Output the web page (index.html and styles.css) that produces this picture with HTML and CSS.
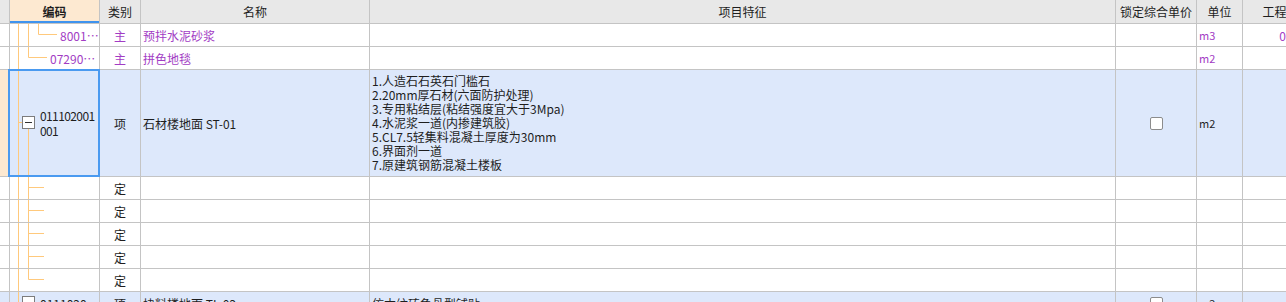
FILE: index.html
```html
<!DOCTYPE html>
<html>
<head>
  <title>清单编制</title>
  <link rel="stylesheet" href="styles.css">
</head>
<body>
  <div class="grid">
    <div class="row head">
      <div class="c c0"></div>
      <div class="c c1 ctr cur-col"><b>编码</b></div>
      <div class="c c2 ctr">类别</div>
      <div class="c c3 ctr">名称</div>
      <div class="c c4 ctr">项目特征</div>
      <div class="c c5 ctr">锁定综合单价</div>
      <div class="c c6 ctr">单位</div>
      <div class="c c7 ctr">工程量</div>
    </div>

    <div class="row">
      <div class="c c0"></div>
      <div class="c c1 code">
        <svg class="tree" width="90" height="22"><path d="M8.5 0V22M18.5 0V22M28.5 0V10.5H47"/></svg>
        <span class="sub lvl3">8001…</span>
      </div>
      <div class="c c2 ctr sub">主</div>
      <div class="c c3 sub">预拌水泥砂浆</div>
      <div class="c c4"></div>
      <div class="c c5"></div>
      <div class="c c6 sub unit">m3</div>
      <div class="c c7 num sub">0.0825</div>
    </div>

    <div class="row">
      <div class="c c0"></div>
      <div class="c c1 code">
        <svg class="tree" width="90" height="22"><path d="M8.5 0V22M18.5 0V10.5H37"/></svg>
        <span class="sub lvl2">07290…</span>
      </div>
      <div class="c c2 ctr sub">主</div>
      <div class="c c3 sub">拼色地毯</div>
      <div class="c c4"></div>
      <div class="c c5"></div>
      <div class="c c6 sub unit">m2</div>
      <div class="c c7"></div>
    </div>

    <div class="row item cur">
      <div class="c c0"></div>
      <div class="c c1 code focus">
        <svg class="tree" width="90" height="106">
          <path d="M8.5 0V106M8 52.5H12M18.5 59V106"/>
          <rect class="box" x="12.5" y="46.5" width="12" height="12"/>
          <path class="minus" d="M15 52.5H22"/>
        </svg>
        <span class="code-no">011102001001</span>
      </div>
      <div class="c c2 ctr">项</div>
      <div class="c c3">石材楼地面 ST-01</div>
      <div class="c c4">
        <div class="feat">
          1.人造石石英石门槛石<br>
          2.20mm厚石材(六面防护处理)<br>
          3.专用粘结层(粘结强度宜大于3Mpa)<br>
          4.水泥浆一道(内掺建筑胶)<br>
          5.CL7.5轻集料混凝土厚度为30mm<br>
          6.界面剂一道<br>
          7.原建筑钢筋混凝土楼板
        </div>
      </div>
      <div class="c c5 ctr"><span class="chk"></span></div>
      <div class="c c6 unit">m2</div>
      <div class="c c7"></div>
    </div>

    <div class="row">
      <div class="c c0"></div>
      <div class="c c1 code"><svg class="tree" width="90" height="22"><path d="M8.5 0V22M18.5 0V22M18 10.5H34"/></svg></div>
      <div class="c c2 ctr">定</div>
      <div class="c c3"></div><div class="c c4"></div><div class="c c5"></div><div class="c c6"></div><div class="c c7"></div>
    </div>
    <div class="row">
      <div class="c c0"></div>
      <div class="c c1 code"><svg class="tree" width="90" height="22"><path d="M8.5 0V22M18.5 0V22M18 10.5H34"/></svg></div>
      <div class="c c2 ctr">定</div>
      <div class="c c3"></div><div class="c c4"></div><div class="c c5"></div><div class="c c6"></div><div class="c c7"></div>
    </div>
    <div class="row">
      <div class="c c0"></div>
      <div class="c c1 code"><svg class="tree" width="90" height="22"><path d="M8.5 0V22M18.5 0V22M18 10.5H34"/></svg></div>
      <div class="c c2 ctr">定</div>
      <div class="c c3"></div><div class="c c4"></div><div class="c c5"></div><div class="c c6"></div><div class="c c7"></div>
    </div>
    <div class="row">
      <div class="c c0"></div>
      <div class="c c1 code"><svg class="tree" width="90" height="22"><path d="M8.5 0V22M18.5 0V22M18 10.5H34"/></svg></div>
      <div class="c c2 ctr">定</div>
      <div class="c c3"></div><div class="c c4"></div><div class="c c5"></div><div class="c c6"></div><div class="c c7"></div>
    </div>
    <div class="row">
      <div class="c c0"></div>
      <div class="c c1 code"><svg class="tree" width="90" height="22"><path d="M8.5 0V22M18.5 0V10.5H34"/></svg></div>
      <div class="c c2 ctr">定</div>
      <div class="c c3"></div><div class="c c4"></div><div class="c c5"></div><div class="c c6"></div><div class="c c7"></div>
    </div>

    <div class="row item">
      <div class="c c0"></div>
      <div class="c c1 code">
        <svg class="tree" width="90" height="22">
          <path d="M8.5 0V22"/>
          <rect class="box" x="12.5" y="4.5" width="12" height="12"/>
        </svg>
        <span class="lvl1">0111020…</span>
      </div>
      <div class="c c2 ctr">项</div>
      <div class="c c3">块料楼地面 TL-02</div>
      <div class="c c4">仿木纹砖龟骨型铺贴</div>
      <div class="c c5 ctr"><span class="chk"></span></div>
      <div class="c c6 unit">m2</div>
      <div class="c c7"></div>
    </div>
  </div>
</body>
</html>
```

FILE: styles.css
```css
body {
  margin: 0;
  background: #fff;
  font-family: "Noto Sans CJK SC", "Liberation Sans", sans-serif;
  font-size: 12px;
  color: #1e1e1e;
  overflow: hidden;
}
.grid { width: 1320px; }
.row {
  display: flex;
  height: 23px;
  border-bottom: 1px solid #c4c4c4;
  box-sizing: border-box;
}
.row.head { height: 24px; background: #e8e8e8; }
.row.item { background: #dde8fb; }
.row.cur { height: 107px; }

.c {
  box-sizing: border-box;
  border-right: 1px solid #c4c4c4;
  display: flex;
  align-items: center;
  padding: 0 2px;
  white-space: nowrap;
  overflow: hidden;
  position: relative;
}
.ctr { justify-content: center; }
.c0 { width: 10px; padding: 0; }
.c1 { width: 90px; }
.c2 { width: 41px; }
.c3 { width: 229px; }
.c4 { width: 746px; }
.c5 { width: 81px; }
.c6 { width: 46px; }
.c7 { width: 76px; }
.num { justify-content: flex-end; }

.head .cur-col {
  background: #fde9d1;
  box-shadow: inset 0 -2px 0 #3f93ee;
}
.cur .c0 { background: #fde9d1; }

/* tree column */
.code { padding: 0; overflow: visible; }
.tree {
  position: absolute;
  left: 0;
  top: 0;
}
.tree path { fill: none; stroke: #ffc97c; stroke-width: 1; }
.tree .box { fill: #fff; stroke: #7c7c7c; }
.tree .minus { stroke: #333; }
.lvl1 { margin-left: 30px; position: relative; }
.lvl2 { margin-left: 40px; position: relative; }
.lvl3 { margin-left: 50px; position: relative; }
.code-no {
  position: relative;
  flex-shrink: 0;
  margin-left: 30px;
  width: 58px;
  letter-spacing: -0.6px;
  white-space: normal;
  word-break: break-all;
  line-height: 15px;
}
.focus::after {
  content: "";
  position: absolute;
  top: -1px;
  left: -2px;
  right: -1px;
  bottom: -1px;
  border: 2px solid #4a9af0;
}

.sub { color: #a23cc4; }
.unit { font-size: 11px; }

.feat { line-height: 14px; }

.chk {
  width: 13px;
  height: 13px;
  box-sizing: border-box;
  border: 1px solid #8c8c8c;
  border-radius: 2px;
  background: #fff;
}
```
